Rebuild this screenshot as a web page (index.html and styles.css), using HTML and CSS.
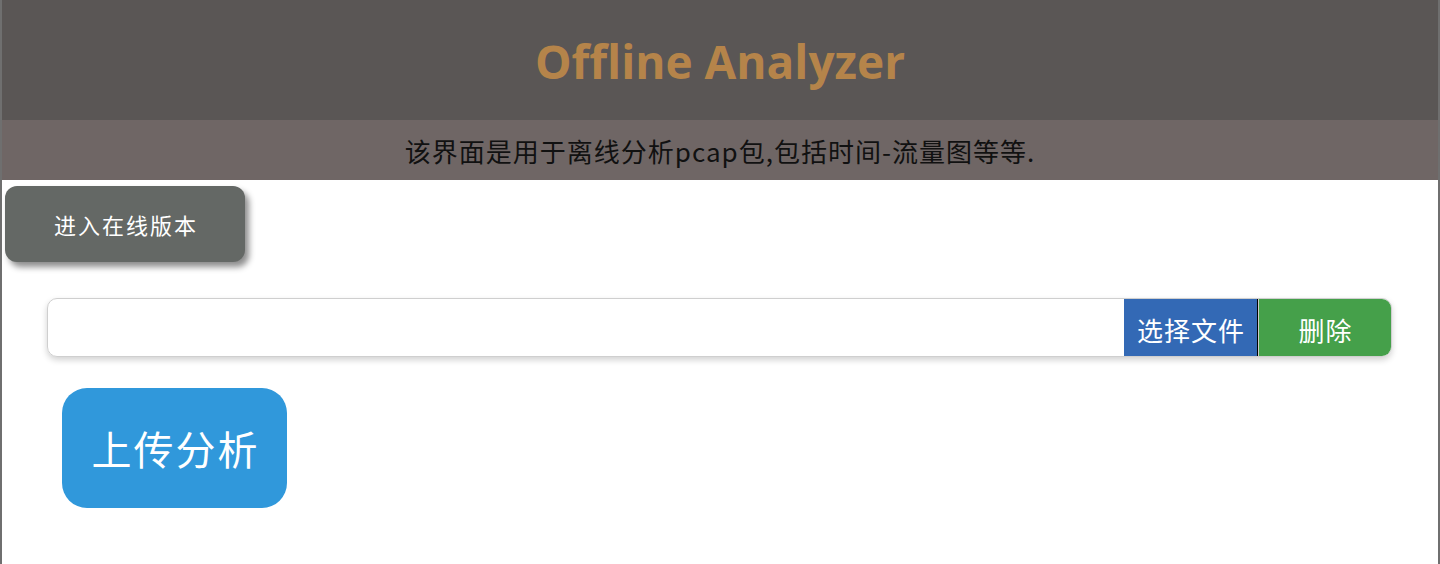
FILE: index.html
```html
<!DOCTYPE html>
<html lang="zh-CN">
<head>
<meta charset="utf-8">
<title>Offline Analyzer</title>
<link rel="stylesheet" href="styles.css">
</head>
<body>
<div class="page">
  <header class="header">
    <h1 class="title">Offline Analyzer</h1>
  </header>
  <div class="subbar">该界面是用于离线分析pcap包,包括时间-流量图等等.</div>
  <div class="online-row">
    <button class="online-btn">进入在线版本</button>
  </div>
  <div class="file-row">
    <div class="file-box">
      <div class="file-name"></div>
      <button class="pick-btn">选择文件</button>
      <button class="del-btn">删除</button>
    </div>
  </div>
  <div class="upload-row">
    <button class="upload-btn">上传分析</button>
  </div>
</div>
</body>
</html>
```

FILE: styles.css
```css
html, body {
  margin: 0;
  padding: 0;
  background: #ffffff;
}
body {
  font-family: "Noto Sans CJK SC", "Noto Sans", sans-serif;
}
.page {
  box-sizing: border-box;
  min-height: 564px;
  border-left: 2px solid #6f6f6f;
  border-right: 2px solid #6f6f6f;
}
.header {
  height: 120px;
  background: #5a5655;
  display: flex;
  align-items: center;
  justify-content: center;
}
.title {
  margin: 0;
  font-family: "Open Sans", "Noto Sans", sans-serif;
  font-weight: 700;
  font-size: 46px;
  color: #b5844a;
  line-height: 1;
  padding-top: 2px;
}
.subbar {
  height: 60px;
  background: #6f6665;
  color: #111111;
  font-size: 26px;
  letter-spacing: 1px;
  display: flex;
  align-items: center;
  justify-content: center;
  box-sizing: border-box;
}
.online-row {
  padding: 6px 0 0 3px;
}
.online-btn {
  width: 240px;
  height: 76px;
  border: none;
  border-radius: 12px;
  background: #646865;
  color: #ffffff;
  font-family: "Noto Sans CJK SC", sans-serif;
  font-size: 22px;
  letter-spacing: 2px;
  box-shadow: 4px 5px 6px rgba(0, 0, 0, 0.45);
  cursor: pointer;
  padding: 0 0 0 2px;
}
.file-row {
  padding: 36px 46px 0 45px;
}
.file-box {
  display: flex;
  height: 59px;
  box-sizing: border-box;
  border: 1px solid #cfcfcf;
  border-radius: 10px;
  overflow: hidden;
  box-shadow: 0 3px 6px rgba(0, 0, 0, 0.18);
}
.file-name {
  flex: 1;
}
.pick-btn, .del-btn {
  border: none;
  color: #ffffff;
  font-family: "Noto Sans CJK SC", sans-serif;
  font-size: 26px;
  letter-spacing: 1px;
  cursor: pointer;
  padding: 4px 0 0 1px;
}
.pick-btn {
  width: 134px;
  background: #3369b5;
  border-right: 1px solid #000000;
}
.del-btn {
  width: 133px;
  background: #45a04a;
  border-left: 1px solid #cccccc;
}
.upload-row {
  padding: 31px 0 0 60px;
}
.upload-btn {
  width: 225px;
  height: 120px;
  border: none;
  border-radius: 25px;
  background: #3098db;
  color: #ffffff;
  font-family: "Noto Sans CJK SC", sans-serif;
  font-size: 40px;
  letter-spacing: 2px;
  cursor: pointer;
  padding: 0 0 0 2px;
}
```
